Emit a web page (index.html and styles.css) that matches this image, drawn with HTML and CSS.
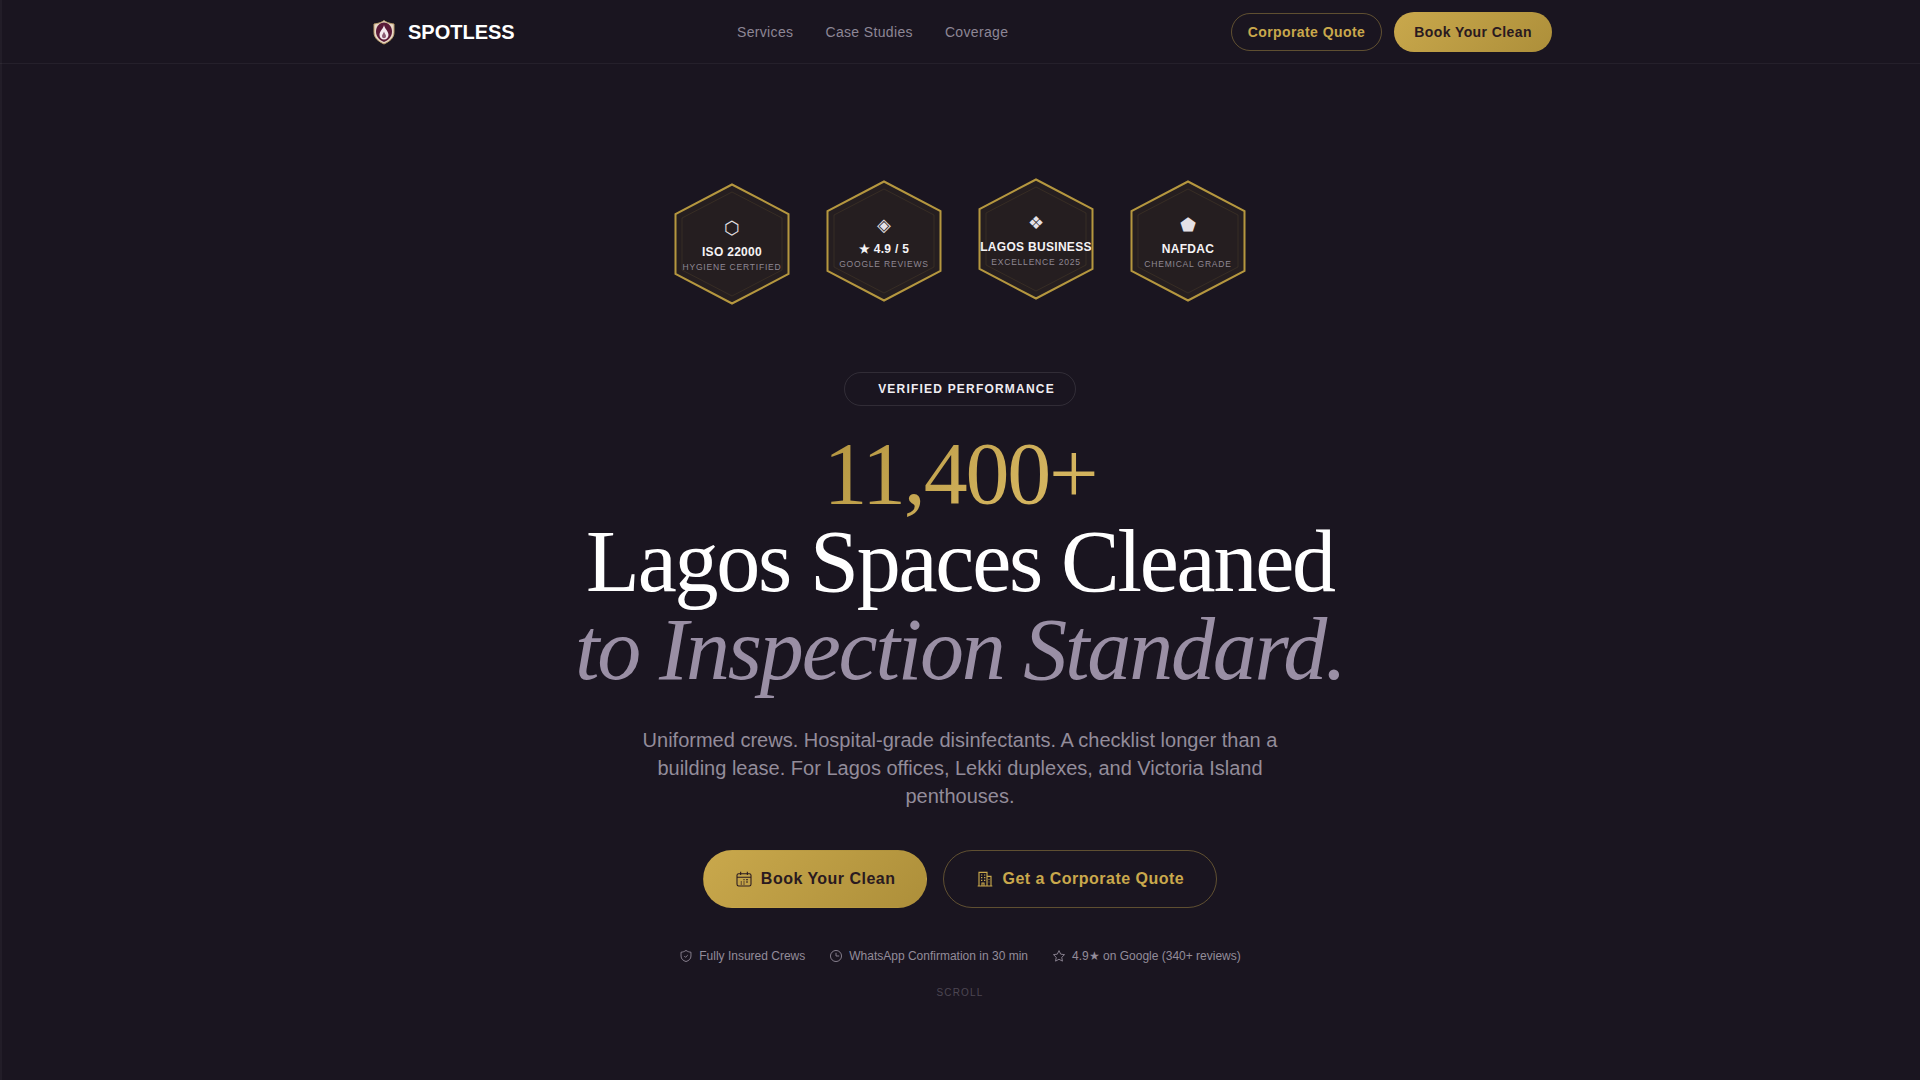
FILE: index.html
```html
<!DOCTYPE html>
<html lang="en">
<head>
<meta charset="utf-8">
<title>Spotless</title>
<link rel="stylesheet" href="styles.css">
</head>
<body>
<header class="nav">
  <div class="nav-inner">
    <a class="brand">
      <svg class="brand-mark" viewBox="0 0 32 32">
        <path d="M16 4.500 C18 6 20.500 7.300 26 8 L26 16.500 C26 22 21.500 25.500 16 28 C10.500 25.500 6 22 6 16.500 L6 8 C11.500 7.300 14 6 16 4.500Z" fill="#e8d8c8" stroke="#b89a68" stroke-width="1"/>
        <path d="M16 6.500 C20.500 6.500 24 10.500 24 15.500 C24 21 20 24.300 16 26 C12 24.300 8 21 8 15.500 C8 10.500 11.500 6.500 16 6.500Z" fill="#5a1a38"/>
        <path d="M16 9 C16.500 12.500 20.500 15 20.500 19 A4.500 4.500 0 0 1 11.500 19 C11.500 15 15.500 12.500 16 9Z" fill="#f3e9ef"/>
        <path d="M16 15.500 C16.500 17.500 18 18.500 18 20.300 A2 2 0 0 1 14 20.300 C14 18.500 15.500 17.500 16 15.500Z" fill="#8a5a72"/>
      </svg>
      <span class="brand-name">SPOTLESS</span>
    </a>
    <nav class="links">
      <a>Services</a>
      <a>Case Studies</a>
      <a>Coverage</a>
    </nav>
    <div class="nav-actions">
      <a class="btn btn-outline btn-sm">Corporate Quote</a>
      <a class="btn btn-gold btn-sm">Book Your Clean</a>
    </div>
  </div>
</header>
<main class="hero">
  <div class="badges">
    <div class="hex hex-a">
      <svg class="hex-frame" viewBox="0 0 116 122"><polygon class="hex-outer" points="58,1.500 114.500,31 114.500,91 58,120.500 1.500,91 1.500,31"/><polygon class="hex-line" points="58,9 108,35 108,87 58,113 8,87 8,35"/></svg>
      <div class="hex-inner"><span class="hex-icon">⬡</span><strong>ISO 22000</strong><small>HYGIENE CERTIFIED</small></div>
    </div>
    <div class="hex hex-b">
      <svg class="hex-frame" viewBox="0 0 116 122"><polygon class="hex-outer" points="58,1.500 114.500,31 114.500,91 58,120.500 1.500,91 1.500,31"/><polygon class="hex-line" points="58,9 108,35 108,87 58,113 8,87 8,35"/></svg>
      <div class="hex-inner"><span class="hex-icon">◈</span><strong>★ 4.9 / 5</strong><small>GOOGLE REVIEWS</small></div>
    </div>
    <div class="hex hex-c">
      <svg class="hex-frame" viewBox="0 0 116 122"><polygon class="hex-outer" points="58,1.500 114.500,31 114.500,91 58,120.500 1.500,91 1.500,31"/><polygon class="hex-line" points="58,9 108,35 108,87 58,113 8,87 8,35"/></svg>
      <div class="hex-inner"><span class="hex-icon">❖</span><strong>LAGOS BUSINESS</strong><small>EXCELLENCE 2025</small></div>
    </div>
    <div class="hex hex-b">
      <svg class="hex-frame" viewBox="0 0 116 122"><polygon class="hex-outer" points="58,1.500 114.500,31 114.500,91 58,120.500 1.500,91 1.500,31"/><polygon class="hex-line" points="58,9 108,35 108,87 58,113 8,87 8,35"/></svg>
      <div class="hex-inner"><span class="hex-icon">⬟</span><strong>NAFDAC</strong><small>CHEMICAL GRADE</small></div>
    </div>
  </div>
  <div class="pill">VERIFIED PERFORMANCE</div>
  <h1 class="headline">
    <span class="line-gold">11,400+</span>
    <span class="line-white">Lagos Spaces Cleaned</span>
    <em class="line-muted">to Inspection Standard.</em>
  </h1>
  <p class="lead">Uniformed crews. Hospital-grade disinfectants. A checklist longer than a building lease. For Lagos offices, Lekki duplexes, and Victoria Island penthouses.</p>
  <div class="cta-row">
    <a class="btn btn-gold btn-lg">
      <svg class="icon-16" viewBox="0 0 24 24" fill="none" stroke="currentColor" stroke-width="1.6"><rect x="1.500" y="4" width="21" height="18.500" rx="2.500"/><path d="M7 1v5M17 1v5M1.500 9.500h21M11 13h2M15 13h3M7 16.500h2M11 16.500h2M15 16.500h3M11 19.500h2M7 19.500h2"/></svg>
      Book Your Clean
    </a>
    <a class="btn btn-outline btn-lg">
      <svg class="icon-16" viewBox="0 0 24 24" fill="none" stroke="currentColor" stroke-width="1.7"><path d="M3 22V2h12v20M15 8h6v14M1 22.500h22M6 6h2M10.500 6h2M6 10h2M10.500 10h2M6 14h2M10.500 14h2M18 12v1M18 16v1M7.500 22v-4h3v4"/></svg>
      Get a Corporate Quote
    </a>
  </div>
  <ul class="trust">
    <li><svg class="icon-14" viewBox="0 0 24 24" fill="none" stroke="currentColor" stroke-width="1.5"><path d="M12 2.500c3 2 5.500 2.800 8.500 3V12c0 5-3.500 8-8.500 9.500C7 20 3.500 17 3.500 12V5.500c3-.2 5.500-1 8.500-3Z"/><path d="m9 12 2.200 2.200L15 10.500"/></svg>Fully Insured Crews</li>
    <li><svg class="icon-14" viewBox="0 0 24 24" fill="none" stroke="currentColor" stroke-width="1.5"><circle cx="12" cy="12" r="9.500"/><path d="M12 6.500V12h5.500"/></svg>WhatsApp Confirmation in 30 min</li>
    <li><svg class="icon-14" viewBox="0 0 24 24" fill="none" stroke="currentColor" stroke-width="1.5"><path d="m12 2.800 2.900 6 6.600.9-4.800 4.600 1.200 6.500L12 17.600l-5.900 3.200 1.200-6.500-4.800-4.600 6.600-.9Z"/></svg>4.9★ on Google (340+ reviews)</li>
  </ul>
  <div class="scroll">SCROLL</div>
</main>
</body>
</html>
```

FILE: styles.css
```css
* { box-sizing: border-box; }
html, body { margin: 0; height: 100%; }
body {
  background:
    linear-gradient(90deg, rgba(255,255,255,.035) 0 2px, transparent 2px),
    #1a1520;
  color: #fff;
  font-family: "Liberation Sans", Arial, sans-serif;
  overflow: hidden;
}
a { text-decoration: none; color: inherit; }

.nav { height: 64px; border-bottom: 1px solid rgba(255,255,255,.05); }
.nav-inner {
  width: 1200px;
  height: 63px;
  margin: 0 auto;
  padding: 0 8px;
  display: flex;
  justify-content: space-between;
  align-items: center;
}
.brand { display: flex; align-items: center; gap: 8px; }
.brand-mark { width: 32px; height: 32px; }
.brand-name { font-size: 20px; font-weight: 700; color: #fff; margin-top: 1px; }
.links { display: flex; gap: 32px; font-size: 14px; letter-spacing: .35px; color: #8d8695; }
.nav-actions { display: flex; gap: 12px; align-items: center; }

.btn {
  display: inline-flex;
  align-items: center;
  justify-content: center;
  border-radius: 999px;
  font-weight: 700;
  letter-spacing: .42px;
}
.btn-gold { background: linear-gradient(135deg, #c9a84c, #ad8f3a); color: #2a1a20; }
.btn-outline { border: 1px solid rgba(201,168,76,.4); color: #c9a84c; }
.btn-sm { height: 38px; padding: 0 16px; font-size: 14px; }
.btn-gold.btn-sm { height: 40px; padding: 0 20px; }
.btn-lg { height: 58px; padding: 0 32px 0 32px; font-size: 16px; gap: 9px; letter-spacing: .48px; border: 1px solid transparent; }
.btn-gold.btn-lg { padding-right: 31px; }
.btn-outline.btn-lg { border-color: rgba(201,168,76,.4); padding: 0 32px 0 33px; }

.hero { display: flex; flex-direction: column; align-items: center; padding-top: 114px; }
.badges { display: flex; gap: 36px; height: 126px; margin-bottom: 68px; }
.hex {
  width: 116px;
  height: 122px;
  position: relative;
}
.hex-a { transform: translateY(5px); }
.hex-b { transform: translateY(2px); }
.hex-frame { position: absolute; inset: 0; width: 100%; height: 100%; }
.hex-outer { fill: #251e20; stroke: #b5973f; stroke-width: 2; }
.hex-line { fill: none; stroke: rgba(201,168,76,.11); stroke-width: 1; }
.hex-inner {
  position: relative;
  width: 100%;
  height: 100%;
  padding-top: 3px;
  display: flex;
  flex-direction: column;
  align-items: center;
  justify-content: center;
  white-space: nowrap;
}
.hex-icon { font-size: 18px; line-height: 20px; color: #e4e1e7; font-family: "DejaVu Sans", sans-serif; margin-bottom: 5px; }
.hex strong { font-size: 12px; line-height: 18px; letter-spacing: .3px; color: #f5f3f5; }
.hex small { font-size: 8.5px; line-height: 12px; letter-spacing: .8px; color: #8f8893; }

.pill {
  width: 232px;
  height: 34px;
  border: 1px solid rgba(255,255,255,.1);
  border-radius: 999px;
  display: flex;
  align-items: center;
  justify-content: center;
  padding-left: 13px;
  font-size: 12px;
  font-weight: 700;
  letter-spacing: 1.2px;
  color: #f0edf2;
}
.headline {
  margin: 24px 0 0;
  font-family: "Liberation Serif", "Times New Roman", serif;
  font-weight: 400;
  font-size: 88px;
  line-height: 88px;
  letter-spacing: -2.2px;
  text-align: center;
}
.headline span, .headline em { display: block; }
.line-gold { background: linear-gradient(135deg, #a88a35 20%, #d4b45f 60%, #c9a84c); -webkit-background-clip: text; background-clip: text; color: transparent; }
.line-white { color: #fff; }
.line-muted { color: #9a8fa5; }

.lead {
  width: 672px;
  margin: 32px 0 0;
  font-size: 20px;
  line-height: 28px;
  text-align: center;
  color: #938c9a;
}
.cta-row { display: flex; gap: 16px; margin-top: 40px; }
.icon-16 { width: 16px; height: 16px; }
.icon-14 { width: 14px; height: 14px; }
.trust { list-style: none; display: flex; gap: 24px; margin: 41px 0 0; padding: 0; font-size: 12px; color: #938c9a; }
.trust li { display: flex; align-items: center; gap: 6px; }
.scroll { margin-top: 24px; font-size: 10px; letter-spacing: 1.2px; color: #4c4652; }
```
